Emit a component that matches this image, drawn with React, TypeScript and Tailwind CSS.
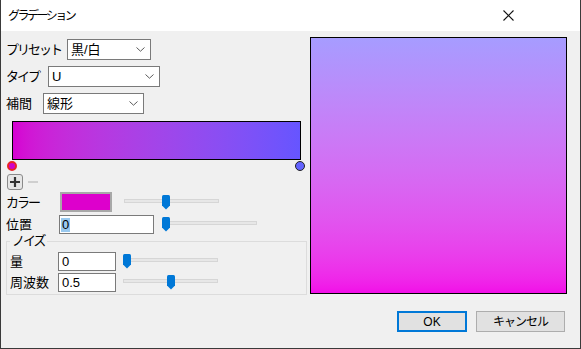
import React from "react";

const F = "font-['Liberation_Sans','Noto_Sans_CJK_JP',sans-serif]";

function Chevron() {
  return (
    <svg width="9" height="5" viewBox="0 0 9 5">
      <path d="M0.5 0.5 L4.5 4.2 L8.5 0.5" fill="none" stroke="#5a5a5a" strokeWidth="1" />
    </svg>
  );
}

function Select({ cls, value }: { cls: string; value: string }) {
  return (
    <div className={`${cls} h-[21px] bg-white border border-[#7a7a7a] flex items-center justify-between pl-[3px] pr-[5px] text-[13px] leading-none text-black`}>
      <span>{value}</span>
      <Chevron />
    </div>
  );
}

function Thumb() {
  return (
    <svg width="8" height="15" viewBox="0 0 8 15">
      <path d="M0 1.5 Q0 0 1.5 0 H6.5 Q8 0 8 1.5 V10.5 L4 14.5 L0 10.5 Z" fill="#0078d7" />
    </svg>
  );
}

function Slider({ cls, thumbCls, trackCls }: { cls: string; thumbCls: string; trackCls: string }) {
  return (
    <div className={`${cls} relative h-[15px] flex items-start`}>
      <div className={`${trackCls} mt-[4px] h-[4px] bg-[#e7e7e7] border border-[#d6d6d6]`} />
      <div className={`absolute top-0 ${thumbCls} flex`}>
        <Thumb />
      </div>
    </div>
  );
}

export default function App() {
  return (
    <div className={`${F} w-[581px] h-[349px] flex flex-col border-x border-b border-[#3a3a3a] bg-[#f0f0f0] text-black overflow-hidden`}>
      {/* title bar */}
      <div className="h-[31px] bg-white flex items-center justify-between pl-[7px] pr-[66px]">
        <span className="text-[12px] tracking-[-2.5px] leading-none">グラデーション</span>
        <svg width="11" height="11" viewBox="0 0 11 11">
          <path d="M0.5 0.5 L10.5 10.5 M10.5 0.5 L0.5 10.5" stroke="#111" strokeWidth="1.1" />
        </svg>
      </div>

      {/* body */}
      <div className="flex-1 flex flex-col pt-[6px]">
        <div className="flex">
          {/* left column */}
          <div className="ml-[5px] w-[301px] flex flex-col text-[13px] leading-none">
            <div className="mt-[2px] h-[21px] flex items-center">
              <span className="w-[61px] tracking-[-2px]">プリセット</span>
              <Select cls="w-[84px]" value="黒/白" />
            </div>
            <div className="mt-[6px] h-[21px] flex items-center">
              <span className="w-[42px] tracking-[-2px]">タイプ</span>
              <Select cls="w-[112px]" value="U" />
            </div>
            <div className="mt-[6px] h-[21px] flex items-center">
              <span className="w-[37px]">補間</span>
              <Select cls="w-[101px]" value="線形" />
            </div>

            {/* gradient bar */}
            <div className="mt-[7px] ml-[6px] w-[289px] h-[39px] border border-black bg-gradient-to-r from-[#d600d2] to-[#6655ff]" />

            {/* stops */}
            <div className="relative h-[10px] mt-[1px]">
              <div className="absolute top-0 left-[1px] w-[10px] h-[10px] rounded-full bg-[#d000c8] border-2 border-[#e82424]" />
              <div className="absolute top-0 left-[289px] w-[10px] h-[10px] rounded-full bg-[#6262ff] border border-[#222]" />
            </div>

            {/* plus / minus */}
            <div className="mt-[2px] h-[17px] flex items-center">
              <div className="ml-[1px] w-[16px] h-[16px] rounded-[3px] border border-[#8a8a8a] bg-[#e6e6e6] flex items-center justify-center">
                <svg width="12" height="12" viewBox="0 0 12 12">
                  <path d="M6 1 V11 M1 6 H11" stroke="#333" strokeWidth="2.2" />
                </svg>
              </div>
              <div className="ml-[5px] w-[10px] h-[2px] bg-[#cfcfcf]" />
            </div>

            {/* color */}
            <div className="mt-[2px] h-[20px] flex items-center">
              <span className="w-[54px] tracking-[-2px]">カラー</span>
              <div className="w-[52px] h-[20px] border-2 border-[#a8a8a8] bg-[#dd00cc]" />
              <Slider cls="ml-[12px] w-[96px]" trackCls="w-[95px]" thumbCls="left-[38px]" />
            </div>

            {/* position */}
            <div className="mt-[3px] h-[19px] flex items-center">
              <span className="w-[53px]">位置</span>
              <div className="w-[95px] h-[19px] bg-white border border-[#7a7a7a] flex items-center pl-[1px]">
                <span className="bg-[#99c9ef] px-[1px] h-[14px] flex items-center text-[13px]">0</span>
              </div>
              <Slider cls="ml-[8px] w-[95px]" trackCls="ml-[2px] w-[93px]" thumbCls="left-0" />
            </div>

            {/* noise group */}
            <div className="relative mt-[7px] border border-[#dcdcdc] pt-[10px] pb-[2px]">
              <span className="absolute -top-[8px] left-[3px] px-[2px] bg-[#f0f0f0] leading-[14px] tracking-[-2px]">ノイズ</span>
              <div className="h-[19px] flex items-center pl-[3px]">
                <span className="w-[48px]">量</span>
                <div className="w-[58px] h-[19px] bg-white border border-[#7a7a7a] flex items-center pl-[3px]">0</div>
                <Slider cls="ml-[7px] w-[95px]" trackCls="w-[95px]" thumbCls="left-0" />
              </div>
              <div className="mt-[2px] h-[19px] flex items-center pl-[3px]">
                <span className="w-[48px]">周波数</span>
                <div className="w-[58px] h-[19px] bg-white border border-[#7a7a7a] flex items-center pl-[3px]">0.5</div>
                <Slider cls="ml-[7px] w-[95px]" trackCls="w-[95px]" thumbCls="left-[44px]" />
              </div>
            </div>
          </div>

          {/* preview */}
          <div className="ml-[3px] w-[257px] h-[257px] border border-black bg-gradient-to-b from-[#a69cff] to-[#f20de8]" />
        </div>

        {/* buttons */}
        <div className="mt-[16px] flex justify-end gap-[9px] pr-[15px] text-[12px] leading-none">
          <div className="w-[70px] h-[21px] border-2 border-[#0078d7] bg-[#e1e1e1] flex items-center justify-center">OK</div>
          <div className="w-[89px] h-[21px] border border-[#adadad] bg-[#e1e1e1] flex items-center justify-center tracking-[-1px]">キャンセル</div>
        </div>
      </div>
    </div>
  );
}
